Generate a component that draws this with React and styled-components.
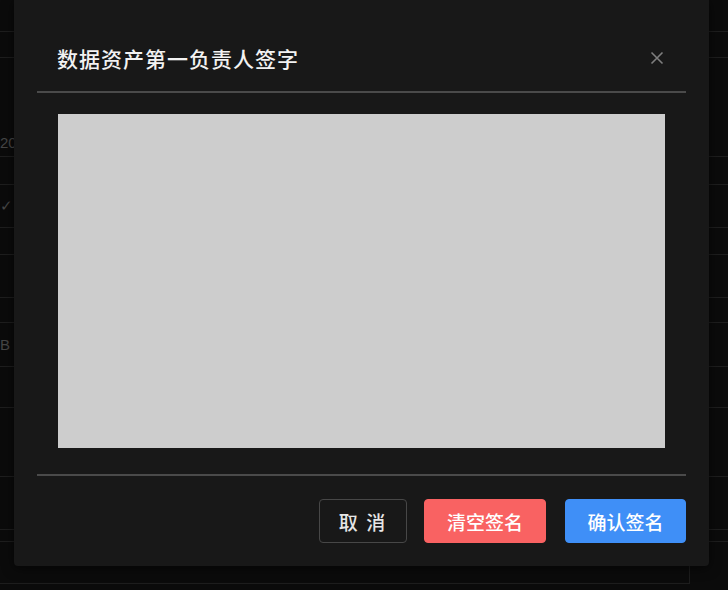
import React from "react";
import styled, { createGlobalStyle } from "styled-components";

const Global = createGlobalStyle`
  html, body { margin: 0; padding: 0; background: #0b0b0b; }
  body { font-family: "Noto Sans CJK SC", "Liberation Sans", sans-serif; }
  #root { width: 728px; height: 590px; overflow: hidden; position: relative; }
`;

const Page = styled.div`
  position: relative;
  width: 728px;
  height: 590px;
  background: #0b0b0b;
  overflow: hidden;
`;

const Form = styled.div`
  display: flex;
  flex-direction: column;
  width: 728px;
`;

const FormRow = styled.div`
  height: ${(p) => p.h}px;
  box-sizing: border-box;
  border-bottom: 1px solid ${(p) => (p.line ? "#1e1e1e" : "transparent")};
  color: #464646;
  font-family: "Liberation Sans", sans-serif;
  font-size: 15px;
  display: flex;
  align-items: center;
  padding-left: 0;
`;

const BottomBox = styled.div`
  margin-top: 0;
  width: 690px;
  height: 42px;
  box-sizing: border-box;
  border-right: 1px solid #1d1d1d;
  border-bottom: 1px solid #1d1d1d;
`;

const Dialog = styled.div`
  position: absolute;
  left: 14px;
  top: 0;
  width: 695px;
  height: 566px;
  background: #181818;
  border-radius: 0 0 4px 4px;
  box-shadow: 0 2px 12px rgba(0, 0, 0, 0.6);
  display: flex;
  flex-direction: column;
  padding: 0 23px;
  box-sizing: border-box;
`;

const Header = styled.div`
  height: 93px;
  display: flex;
  align-items: center;
  justify-content: space-between;
  padding: 24px 20px 0 20px;
  box-sizing: border-box;
  border-bottom: 2px solid #4a4a4a;
`;

const Title = styled.div`
  color: #f2f2f2;
  font-size: 21px;
  font-weight: 500;
  letter-spacing: 1px;
`;

const Close = styled.button`
  background: none;
  border: none;
  padding: 0;
  width: 16px;
  height: 16px;
  display: flex;
  align-items: center;
  justify-content: center;
  color: #7e7e7e;
  margin-right: 1px;
`;

const Body = styled.div`
  padding: 21px 21px 26px 21px;
  border-bottom: 2px solid #4a4a4a;
`;

const Canvas = styled.div`
  width: 607px;
  height: 334px;
  background: #cdcdcd;
`;

const Footer = styled.div`
  display: flex;
  justify-content: flex-end;
  align-items: center;
  padding-top: 23px;
`;

const Btn = styled.button`
  height: 44px;
  width: ${(p) => p.w}px;
  border-radius: 4px;
  box-sizing: border-box;
  font-family: "Noto Sans CJK SC", sans-serif;
  font-size: 19px;
  font-weight: 500;
  letter-spacing: ${(p) => p.ls || 0}px;
  border: 1px solid ${(p) => p.border || p.bg};
  background: ${(p) => p.bg};
  color: ${(p) => p.fg};
  margin-left: ${(p) => p.ml || 0}px;
  padding: 0;
`;

const rows = [
  { h: 32, line: true },
  { h: 26, line: true },
  { h: 70 },
  { h: 29, line: true, t: "20" },
  { h: 28, line: true },
  { h: 43, line: true, t: "✓" },
  { h: 27, line: true },
  { h: 43, line: true },
  { h: 25, line: true },
  { h: 44, line: true, t: "B" },
  { h: 41, line: true },
  { h: 69, line: true },
  { h: 53, line: true },
  { h: 12, line: true },
];

export default function App() {
  return (
    <>
      <Global />
      <Page>
        <Form>
          {rows.map((r, i) => (
            <FormRow key={i} h={r.h} line={r.line}>
              {r.t}
            </FormRow>
          ))}
          <BottomBox />
        </Form>
        <Dialog>
          <Header>
            <Title>数据资产第一负责人签字</Title>
            <Close aria-label="close">
              <svg width="14" height="14" viewBox="0 0 14 14">
                <path d="M1.5 1.5L12.5 12.5M12.5 1.5L1.5 12.5" stroke="currentColor" strokeWidth="1.6" />
              </svg>
            </Close>
          </Header>
          <Body>
            <Canvas />
          </Body>
          <Footer>
            <Btn w={88} bg="transparent" border="#474747" fg="#e6e6e6" ls={2}>取 消</Btn>
            <Btn w={122} bg="#f96262" fg="#ffffff" ml={17}>清空签名</Btn>
            <Btn w={121} bg="#3f8ff7" fg="#ffffff" ml={19}>确认签名</Btn>
          </Footer>
        </Dialog>
      </Page>
    </>
  );
}
